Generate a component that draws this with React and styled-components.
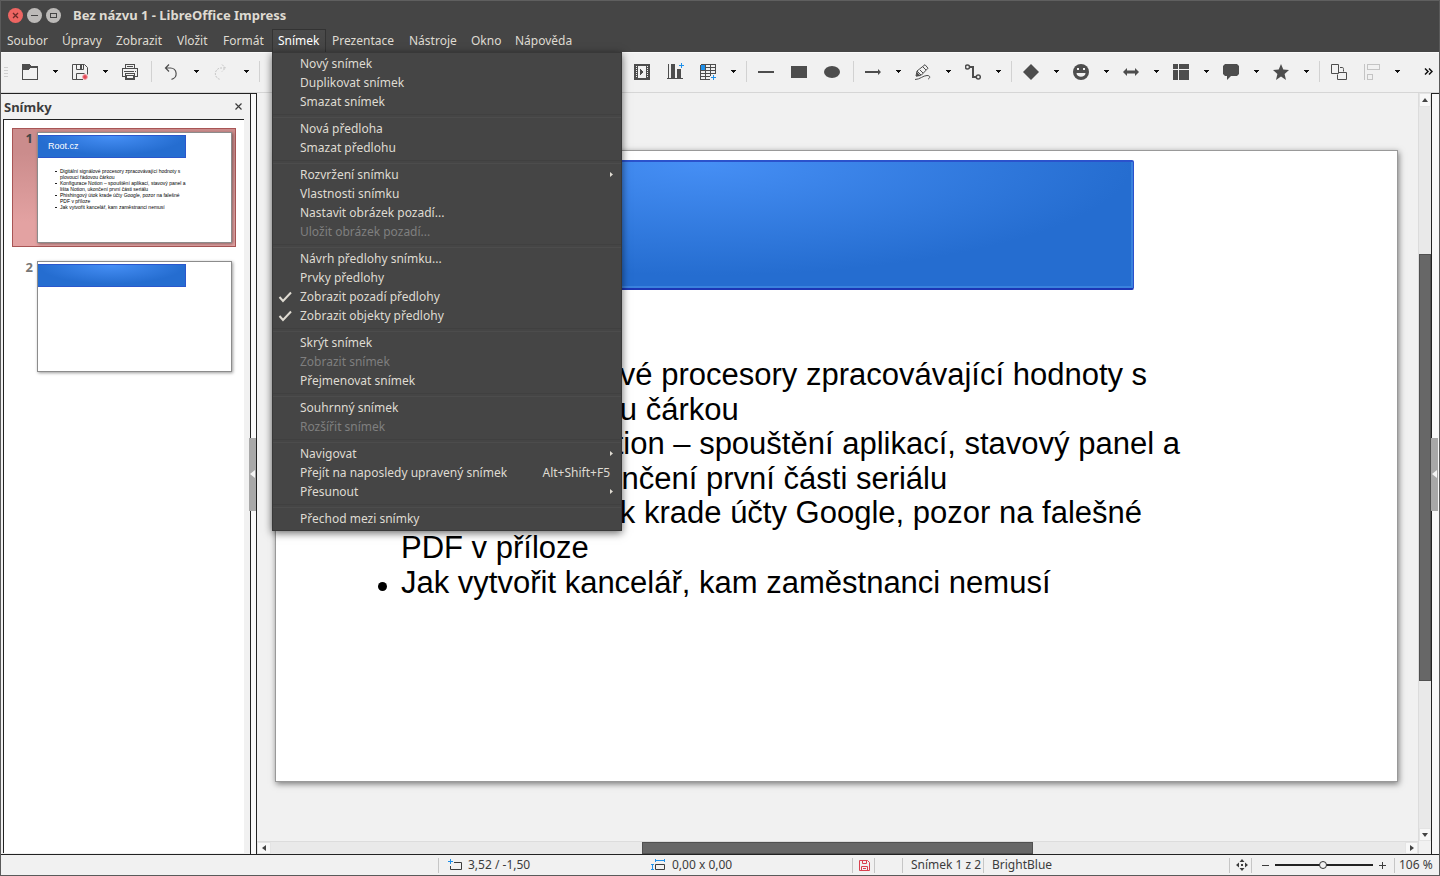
import React from "react";
import styled, { createGlobalStyle, css } from "styled-components";

const UI = `"Noto Sans", "Open Sans", sans-serif`;
const DARK = "#454545";
const LIGHT = "#f1f1f1";
const INK = "#4d4d4d";

const Global = createGlobalStyle`
  * { box-sizing: border-box; }
  body { margin: 0; background: ${LIGHT}; font: 12px/18px ${UI}; color: #3c3c3c; }
  button { font: inherit; color: inherit; border: 0; padding: 0; margin: 0; background: none; text-align: left; }
  ul, ol { list-style: none; margin: 0; padding: 0; }
  h1, h2, p { margin: 0; font: inherit; }
  svg { display: block; flex: none; }
`;

const Window = styled.div`
  display: flex;
  flex-direction: column;
  min-height: 100vh;
  background: ${LIGHT};
  border: solid #5a5a5a;
  border-width: 0 1px 1px;
`;

/* ---- title bar and menus ---- */
const TitleBar = styled.header`
  display: flex;
  align-items: center;
  gap: 4px;
  height: 29px;
  padding-left: 7px;
  background: ${DARK};
  border-top: 1px solid #5f5f5f;
`;
const WindowButton = styled.button`
  display: grid;
  place-items: center;
  width: 15px;
  height: 15px;
  border-radius: 50%;
  background: ${(p) => (p.$close ? "#ee6562" : "#bcbab8")};
`;
const WindowTitle = styled.h1`
  padding-left: 8px;
  font-size: 13px;
  font-weight: 700;
  color: #dfdbd2;
`;
const MenuBar = styled.ul`
  display: grid;
  grid-template-columns: 55px 54px 61px 46px 55px 54px 77px 62px 44px 71px;
  height: 23px;
  background: ${DARK};
  color: #dfdbd2;
`;
const MenuBarItem = styled.li`
  position: relative;
  display: flex;
  border: solid transparent;
  border-width: 1px 1px 0;
  ${(p) => p.$open && css`
    border-color: #333;
    background: linear-gradient(#4a4a4a, #454545);
    color: #fff;
  `}
  > button { width: 100%; padding-left: 5px; white-space: nowrap; }
`;
const Dropdown = styled.ul`
  position: absolute;
  z-index: 5;
  top: 22px;
  left: -1px;
  width: 350px;
  padding: 1px 0 2px;
  background: ${DARK};
  border: 1px solid #383838;
  box-shadow: 0 2px 8px rgba(0, 0, 0, 0.6);
  color: #dfdbd2;
`;
const Separator = styled.li`
  height: 8px;
  padding-top: 3px;
  &::before {
    content: "";
    display: block;
    height: 2px;
    border-top: 1px solid #404040;
    border-bottom: 1px solid #4c4c4c;
  }
`;
const DropdownButton = styled.button`
  display: grid;
  grid-template-columns: 27px 1fr auto;
  align-items: center;
  width: 100%;
  height: 19px;
  padding-right: 11px;
  white-space: nowrap;
  &:disabled { color: #7f7f7f; }
  > svg:first-child { margin-left: 5px; }
  > svg:last-child { margin-right: -5px; }
`;

/* ---- toolbar ---- */
const Toolbar = styled.div`
  display: flex;
  align-items: center;
  height: 41px;
  padding: 0 0 2px 3px;
  border-top: 1px solid #fafafa;
  border-bottom: 1px solid #d6d6d6;
`;
const Handle = styled.span`
  display: grid;
  gap: 2px;
  width: 10px;
  i { width: 4px; height: 1px; background: #cfcfcf; }
`;
const Group = styled.div`
  display: flex;
  align-items: center;
  height: 32px;
`;
const Divider = styled.span`
  width: 8px;
  height: 21px;
  border-left: 4px solid transparent;
  &::before { content: ""; display: block; width: 1px; height: 21px; background: #d2d2d2; }
`;
const ToolButton = styled.button`
  display: grid;
  place-items: center;
  width: 33px;
  height: 32px;
  padding-right: 1px;
  color: ${INK};
  &:disabled { color: #c4c4c4; }
`;
const CaretButton = styled.button`
  display: grid;
  place-items: center;
  width: 17px;
  height: 32px;
  color: #111;
`;
const CoveredGroup = styled.div`
  flex: none;
  width: 363px;
`;
const Overflow = styled.button`
  margin: 0 6px 0 auto;
  color: #111;
`;

/* ---- work area ---- */
const Work = styled.main`
  display: flex;
  flex: 1;
  border-bottom: 1px solid #222;
`;
const SidePanel = styled.aside`
  display: flex;
  flex-direction: column;
  flex: none;
  width: 249px;
  padding: 0 6px 1px 2px;
  border-top: 1px solid #222;
`;
const PanelHead = styled.div`
  display: flex;
  align-items: center;
  justify-content: space-between;
  height: 25px;
  padding: 0 2px 0 1px;
  h2 { font-weight: 700; font-size: 13px; }
`;
const SlideList = styled.ol`
  display: flex;
  flex-direction: column;
  gap: 10px;
  flex: 1;
  padding: 8px;
  background: #fff;
  border: solid #222;
  border-width: 1px 0 0 1px;
`;
const SlideItem = styled.li`
  display: grid;
  grid-template-columns: 20px 195px;
  column-gap: 4px;
  width: 224px;
  height: 119px;
  padding-top: 3px;
  border: 1px solid transparent;
  color: #777;
  ${(p) => p.$selected && css`
    background: linear-gradient(#cb8c8c 20%, #e3a2a2 80%);
    border-color: #a85555;
    color: #444;
  `}
  > b { font-size: 13px; line-height: 12px; text-align: right; }
`;
const Thumb = styled.div`
  height: 111px;
  padding-top: 2px;
  background: #fff;
  border: 1px solid #8c8c8c;
  box-shadow: 1px 1px 3px rgba(0, 0, 0, 0.4);
  font-family: "Liberation Sans", Arial, sans-serif;
  color: #000;
`;
const Banner = styled.div`
  width: 76.5%;
  background: radial-gradient(ellipse 50% 90% at 50% 0, #468ff5, #256dd0);
  color: #fff;
`;
const ThumbBanner = styled(Banner)`
  height: 23px;
  padding-left: 10px;
  border: solid #2b57cc;
  border-width: 1px 1px 1px 0;
  font-size: 9px;
  line-height: 21px;
`;
const ThumbBullets = styled.ul`
  padding: 10px 42px 0 17px;
  font-size: 5px;
  line-height: 6px;
  li { display: grid; grid-template-columns: 5px 1fr; }
  li::before { content: ""; width: 2px; height: 1px; margin-top: 3px; background: #222; }
`;
const Splitter = styled.div`
  display: flex;
  align-items: center;
  flex: none;
  width: ${(p) => (p.$right ? 8 : 7)}px;
  border: solid #222;
  border-width: 1px ${(p) => (p.$right ? 0 : 1)}px 0 1px;
  background: #f8f8f8;
  button {
    display: grid;
    place-items: center;
    flex: none;
    width: 7px;
    height: 73px;
    margin-left: ${(p) => (p.$right ? -1 : -2)}px;
    background: #a8a8a8;
  }
`;
const Editor = styled.section`
  display: flex;
  flex-direction: column;
  flex: 1;
  min-width: 0;
`;
const Canvas = styled.div`
  display: flex;
  align-items: center;
  flex: 1;
  padding: 0 20px 2px 18px;
`;
const Slide = styled.article`
  flex: 1;
  aspect-ratio: 16 / 9;
  padding-top: 9px;
  background: #fff;
  border: 1px solid #999;
  box-shadow: 1px 2px 6px rgba(0, 0, 0, 0.5);
  font-family: "Liberation Sans", Arial, sans-serif;
  color: #000;
`;
const SlideBanner = styled(Banner)`
  height: 130px;
  border: solid #2b52cc;
  border-width: 2px 1px 2px 0;
  border-bottom-color: #1c36b4;
  border-radius: 0 2px 2px 0;
  box-shadow: inset -2px -2px #3a82de;
`;
const Bullets = styled.ul`
  padding: 68px 190px 0 102px;
  font-size: 31px;
  line-height: 1.115;
  li { display: grid; grid-template-columns: 23px 1fr; }
  li::before { content: ""; width: 9px; height: 9px; margin-top: 16px; border-radius: 50%; background: #000; }
`;

/* ---- scroll bars ---- */
const ScrollBar = styled.div`
  display: grid;
  flex: none;
  background: #e9e9e9;
  ${(p) => p.$vertical
    ? css`width: 13px; grid-template-rows: 14px 147fr 428fr 147fr 13px 13px; border-left: 1px solid #dcdcdc;`
    : css`height: 13px; grid-template-columns: 14px 371fr 391fr 372fr 13px; border-top: 1px solid #dcdcdc;`}
  > button { display: grid; place-items: center; background: #f8f8f8; color: #444; box-shadow: inset 0 0 0 1px #e4e4e4; }
`;
const ScrollThumb = styled.div`
  background: #676767;
  border: 1px solid #505050;
`;
const Corner = styled.span`
  background: ${LIGHT};
`;

/* ---- status bar ---- */
const Status = styled.footer`
  display: grid;
  grid-template-columns: 437px 203px 211px 22px 28px 81px 1fr 22px 143px 45px;
  align-items: center;
  height: 20px;
`;
const Cell = styled.div`
  display: flex;
  align-items: center;
  gap: 6px;
  height: 15px;
  padding-left: ${(p) => p.$pad ?? 8}px;
  border-left: ${(p) => (p.$plain ? 0 : 1)}px solid #c6c6c6;
  white-space: nowrap;
`;
const Zoom = styled.input`
  appearance: none;
  width: 98px;
  height: 11px;
  margin: 0;
  background: linear-gradient(#222, #222) center / 100% 2px no-repeat;
  &::-webkit-slider-thumb {
    appearance: none;
    width: 8px;
    height: 8px;
    border: 1px solid #333;
    border-radius: 50%;
    background: #f1f1f1;
  }
`;

const Svg = ({ w = 16, h = 16, crisp, children }) => (
  <svg width={w} height={h} viewBox={`0 0 ${w} ${h}`} fill="none" stroke="currentColor"
    shapeRendering={crisp ? "crispEdges" : undefined} aria-hidden="true">{children}</svg>
);
const F = { fill: "currentColor", stroke: "none" };

const Caret = () => <Svg w={5} h={3} crisp><path {...F} d="M0 0h5v1H0zM1 1h3v1H1zM2 2h1v1H2z" /></Svg>;
const ArrowRight = () => <Svg w={3} h={5}><path {...F} d="M0 0l3 2.500-3 2.500z" /></Svg>;
const Check = () => <Svg w={14} h={12}><path d="M1.500 6l3.500 4L13 1.500" strokeWidth="2" /></Svg>;

const icons = {
  open: <Svg crisp><path {...F} d="M0 0h7l2 2h7v14H0zM1 6v9h14V4H8L6 6z" fillRule="evenodd" /></Svg>,
  save: <Svg><path d="M.5.5h12l3 3v7M11 15.5H.5V.5M4.5.5v5h7v-5M4.5 15V9.5h8" /><path {...F} d="M8 1h2v4H8z" /><circle cx="13" cy="13" r="2.4" fill="#e04855" stroke="#f3a0a8" /></Svg>,
  print: <Svg crisp><path {...F} d="M3 0h10v4h-1V1H4v3H3zM5 2h6v1H5zM0 4h16v9h-3v-1h2V5H1v7h2v1H0zM2 7h10v1H2zM13 7h1v1h-1zM3 9h10v7H3zM4 10v1h8v-1z" fillRule="evenodd" /><path d="M5 12h6v2H5z" fill="#f1f1f1" stroke="none" /></Svg>,
  undo: <Svg><path d="M6 .5L2.500 4 6 7.500M3 4h4.500a5.700 5.700 0 0 1 1 11.300" strokeWidth="1.200" /></Svg>,
  redo: <Svg><path d="M9 .5L12.500 4 9 7.500M12 4H8a5.700 5.700 0 0 0-1 11.300" strokeDasharray="2 1" /></Svg>,
  film: <Svg crisp><path {...F} d="M0 0h16v16H0zM4 2v12h8V2z" fillRule="evenodd" /><path d="M2.500 2v12M13.500 2v12" stroke="#f1f1f1" strokeDasharray="1 1" /><path {...F} d="M6 5l4 3-4 3z" /></Svg>,
  chart: <Svg w={18} h={18}><g shapeRendering="crispEdges"><path {...F} d="M2 1h1v15H2zM1 15h16v1H1zM5 1h4v14H5zM11 6h4v9h-4z" /></g><path d="M15.500 0v5M13 2.500h5" stroke="#1e90ea" /></Svg>,
  table: <Svg crisp><path d="M.5.5h15v9M.5.500v15h9M5.500.500v15M10.500.500v11M0 3.500h16M0 6.500h16M0 9.500h16M0 12.500h10" /><path d="M1 1h4v5H1zM13 11h1v5h-1zM11 13h5v1h-5z" fill="#1e90ea" stroke="none" /></Svg>,
  line: <Svg crisp><path {...F} d="M0 7h16v2H0z" /></Svg>,
  rect: <Svg crisp><path {...F} d="M0 2h16v12H0z" /></Svg>,
  ellipse: <Svg><ellipse {...F} cx="8" cy="8" rx="8" ry="6" /></Svg>,
  arrow: <Svg><path {...F} d="M0 7h13V5l3 3-3 3V9H0z" /></Svg>,
  draw: <Svg><path d="M1 12l1-5L10 .7l3 3.500L6.500 11zM2 7l4 4M8 3l3 3M5 6l3 3" /><path {...F} d="M1 12.500L2 8l3.500 4z" /><path d="M0 15.500c5 0 8-4 12-4 4 0 3 3 1 3.500" /></Svg>,
  connector: <Svg><circle cx="2.500" cy="3" r="2" strokeWidth="1.500" /><circle cx="13.300" cy="13" r="2" strokeWidth="1.500" /><path d="M4.500 3H8v10h3" strokeWidth="2" /></Svg>,
  diamond: <Svg><path {...F} d="M8 0l8 8-8 8-8-8z" /></Svg>,
  smile: <Svg><circle {...F} cx="8" cy="8" r="8" /><path d="M4 4h2v2H4zM10 4h2v2h-2zM3.500 9h9c0 5-9 5-9 0z" fill="#f1f1f1" stroke="none" /></Svg>,
  double: <Svg><path {...F} d="M0 8l4-4v2.500h8V4l4 4-4 4V9.500H4V12z" /></Svg>,
  flow: <Svg crisp><path {...F} d="M0 0h5v5H0zM6 0h10v5H6zM0 6h5v10H0zM6 6h10v10H6z" /></Svg>,
  callout: <Svg><path {...F} d="M2 0h12l2 2v8l-2 2H8l-4 4v-4H2l-2-2V2z" /></Svg>,
  star: <Svg><path {...F} d="M8 0l2.300 5.500 5.700.4-4.400 4L13 16l-5-3.500L3 16l1.400-6.100L0 5.900l5.700-.4z" /></Svg>,
  arrange: <Svg><path d="M.5.500h7v9h-7zM7.500 8.500h8v7h-9v-5M9 3.500h2.500c1 0 1 1 1 4" /></Svg>,
  align: <Svg crisp><path d="M.5 0v16M3.500.5h12v5h-12zM3.500 10.500h5v5h-5z" /></Svg>,
};

const Tool = ({ icon, label, caret, disabled }) => (
  <>
    <ToolButton aria-label={label} disabled={disabled}>{icons[icon]}</ToolButton>
    {caret && <CaretButton aria-label={`${label} – možnosti`}><Caret /></CaretButton>}
  </>
);

const menus = ["Soubor", "Úpravy", "Zobrazit", "Vložit", "Formát", "Snímek", "Prezentace", "Nástroje", "Okno", "Nápověda"];

const slideMenu = [
  { label: "Nový snímek" },
  { label: "Duplikovat snímek" },
  { label: "Smazat snímek" },
  null,
  { label: "Nová předloha" },
  { label: "Smazat předlohu" },
  null,
  { label: "Rozvržení snímku", sub: true },
  { label: "Vlastnosti snímku" },
  { label: "Nastavit obrázek pozadí..." },
  { label: "Uložit obrázek pozadí...", disabled: true },
  null,
  { label: "Návrh předlohy snímku..." },
  { label: "Prvky předlohy" },
  { label: "Zobrazit pozadí předlohy", checked: true },
  { label: "Zobrazit objekty předlohy", checked: true },
  null,
  { label: "Skrýt snímek" },
  { label: "Zobrazit snímek", disabled: true },
  { label: "Přejmenovat snímek" },
  null,
  { label: "Souhrnný snímek" },
  { label: "Rozšířit snímek", disabled: true },
  null,
  { label: "Navigovat", sub: true },
  { label: "Přejít na naposledy upravený snímek", keys: "Alt+Shift+F5" },
  { label: "Přesunout", sub: true },
  null,
  { label: "Přechod mezi snímky" },
];

const bullets = [
  "Digitální signálové procesory zpracovávající hodnoty s plovoucí řádovou čárkou",
  "Konfigurace Notion – spouštění aplikací, stavový panel a lišta Notion, ukončení první části seriálu",
  "Phishingový útok krade účty Google, pozor na falešné PDF v příloze",
  "Jak vytvořit kancelář, kam zaměstnanci nemusí",
];

const SlideMenu = () => (
  <Dropdown role="menu">
    {slideMenu.map((m, i) =>
      m === null ? <Separator key={i} role="separator" /> : (
        <li key={i} role="none">
          <DropdownButton role={m.checked ? "menuitemcheckbox" : "menuitem"} aria-checked={m.checked} disabled={m.disabled}>
            {m.checked ? <Check /> : <span />}
            <span>{m.label}</span>
            {m.sub ? <ArrowRight /> : <span>{m.keys}</span>}
          </DropdownButton>
        </li>
      ))}
  </Dropdown>
);

const SplitHandle = () => (
  <button aria-label="Skrýt panel">
    <Svg w={5} h={8}><path d="M5 0v8L0 4z" fill="#f4f4f4" stroke="none" /></Svg>
  </button>
);

const Arrow = ({ d, w = 5, h = 5 }) => <Svg w={w} h={h}><path {...F} d={d} /></Svg>;

export default function App() {
  return (
    <Window>
      <Global />
      <TitleBar>
        <WindowButton $close aria-label="Zavřít"><Svg w={7} h={7}><path d="M1 1l5 5M6 1L1 6" stroke="#6b2a28" strokeWidth="1.300" /></Svg></WindowButton>
        <WindowButton aria-label="Minimalizovat"><Svg w={7} h={7} crisp><path d="M0 3.500h7" stroke="#444" /></Svg></WindowButton>
        <WindowButton aria-label="Maximalizovat"><Svg w={7} h={5} crisp><path d="M.5.500h6v4h-6z" stroke="#444" /></Svg></WindowButton>
        <WindowTitle>Bez názvu 1 - LibreOffice Impress</WindowTitle>
      </TitleBar>
      <nav>
        <MenuBar>
          {menus.map((m) => (
            <MenuBarItem key={m} $open={m === "Snímek"}>
              <button>{m}</button>
              {m === "Snímek" && <SlideMenu />}
            </MenuBarItem>
          ))}
        </MenuBar>
      </nav>
      <Toolbar>
        <Handle><i /><i /><i /><i /></Handle>
        <Group>
          <Tool icon="open" label="Otevřít" caret />
          <Tool icon="save" label="Uložit" caret />
          <Tool icon="print" label="Tisk" />
        </Group>
        <Divider />
        <Group>
          <Tool icon="undo" label="Zpět" caret />
          <Tool icon="redo" label="Znovu" caret disabled />
        </Group>
        <Divider />
        <CoveredGroup />
        <Group>
          <Tool icon="film" label="Zvuk nebo video" />
          <Tool icon="chart" label="Graf" />
          <Tool icon="table" label="Tabulka" caret />
        </Group>
        <Divider />
        <Group>
          <Tool icon="line" label="Čára" />
          <Tool icon="rect" label="Obdélník" />
          <Tool icon="ellipse" label="Elipsa" />
        </Group>
        <Divider />
        <Group>
          <Tool icon="arrow" label="Šipka" caret />
          <Tool icon="draw" label="Křivka" caret />
          <Tool icon="connector" label="Spojnice" caret />
        </Group>
        <Divider />
        <Group>
          <Tool icon="diamond" label="Základní tvary" caret />
          <Tool icon="smile" label="Symboly" caret />
          <Tool icon="double" label="Blokové šipky" caret />
          <Tool icon="flow" label="Vývojové diagramy" caret />
          <Tool icon="callout" label="Bubliny" caret />
          <Tool icon="star" label="Hvězdy" caret />
        </Group>
        <Divider />
        <Group>
          <Tool icon="arrange" label="Uspořádat" />
          <Tool icon="align" label="Zarovnat" caret disabled />
        </Group>
        <Overflow aria-label="Další">
          <Svg w={9} h={7}><path d="M1 .5l3 3-3 3M5 .5l3 3-3 3" strokeWidth="1.500" /></Svg>
        </Overflow>
      </Toolbar>

      <Work>
        <SidePanel>
          <PanelHead>
            <h2>Snímky</h2>
            <button aria-label="Zavřít panel"><Svg w={7} h={7}><path d="M.5.500l6 6M6.500.500l-6 6" strokeWidth="1.200" /></Svg></button>
          </PanelHead>
          <SlideList>
            <SlideItem $selected>
              <b>1</b>
              <Thumb>
                <ThumbBanner>Root.cz</ThumbBanner>
                <ThumbBullets>{bullets.map((b) => <li key={b}>{b}</li>)}</ThumbBullets>
              </Thumb>
            </SlideItem>
            <SlideItem>
              <b>2</b>
              <Thumb><ThumbBanner /></Thumb>
            </SlideItem>
          </SlideList>
        </SidePanel>
        <Splitter><SplitHandle /></Splitter>
        <Editor>
          <Canvas>
            <Slide>
              <SlideBanner />
              <Bullets>{bullets.map((b) => <li key={b}>{b}</li>)}</Bullets>
            </Slide>
          </Canvas>
          <ScrollBar>
            <button aria-label="Posunout doleva"><Arrow w={4} h={6} d="M4 0v6L0 3z" /></button>
            <span />
            <ScrollThumb />
            <span />
            <button aria-label="Posunout doprava"><Arrow w={4} h={6} d="M0 0v6l4-3z" /></button>
          </ScrollBar>
        </Editor>
        <ScrollBar $vertical>
          <button aria-label="Posunout nahoru"><Arrow w={6} h={4} d="M0 4h6L3 0z" /></button>
          <span />
          <ScrollThumb />
          <span />
          <button aria-label="Posunout dolů"><Arrow w={6} h={4} d="M0 0h6L3 4z" /></button>
          <Corner />
        </ScrollBar>
        <Splitter $right><SplitHandle /></Splitter>
      </Work>

      <Status>
        <span />
        <Cell $pad={9}>
          <Svg w={14} h={13}><path d="M6 3.500h7.500v7H2.500V7" /><path d="M2.500 0v5M0 2.500h5" stroke="#1e90ea" /></Svg>
          3,52 / -1,50
        </Cell>
        <Cell $plain $pad={10}>
          <Svg w={15} h={12}><path d="M4.500 5.500h9v5h-9z" /><path d="M4 1.500h10M4.500 0v3M13.500 0v3M1.500 5v6M0 5.500h3M0 10.500h3" stroke="#1e90ea" /></Svg>
          0,00 x 0,00
        </Cell>
        <Cell $pad={6}>
          <Svg w={11} h={11}><path d="M.5.500h8l2 2v8H.5zM3.500.500v3h4v-3M2.500 10V6.500h6V10M4 8.500h3" stroke="#d9404f" /></Svg>
        </Cell>
        <Cell />
        <Cell>Snímek 1 z 2</Cell>
        <Cell>BrightBlue</Cell>
        <Cell $pad={6}>
          <Svg w={12} h={12}><path {...F} d="M6 0l2.500 3h-5zM6 12l2.500-3h-5zM0 6l3-2.500v5zM12 6L9 3.500v5zM5 5h2v2H5z" /></Svg>
        </Cell>
        <Cell $pad={10}>
          <Svg w={7} h={7} crisp><path d="M0 3.500h7" /></Svg>
          <Zoom type="range" min="0" max="100" defaultValue="49" aria-label="Přiblížení" />
          <Svg w={7} h={7} crisp><path d="M0 3.500h7M3.500 0v7" /></Svg>
        </Cell>
        <Cell $pad={4}>106 %</Cell>
      </Status>
    </Window>
  );
}
